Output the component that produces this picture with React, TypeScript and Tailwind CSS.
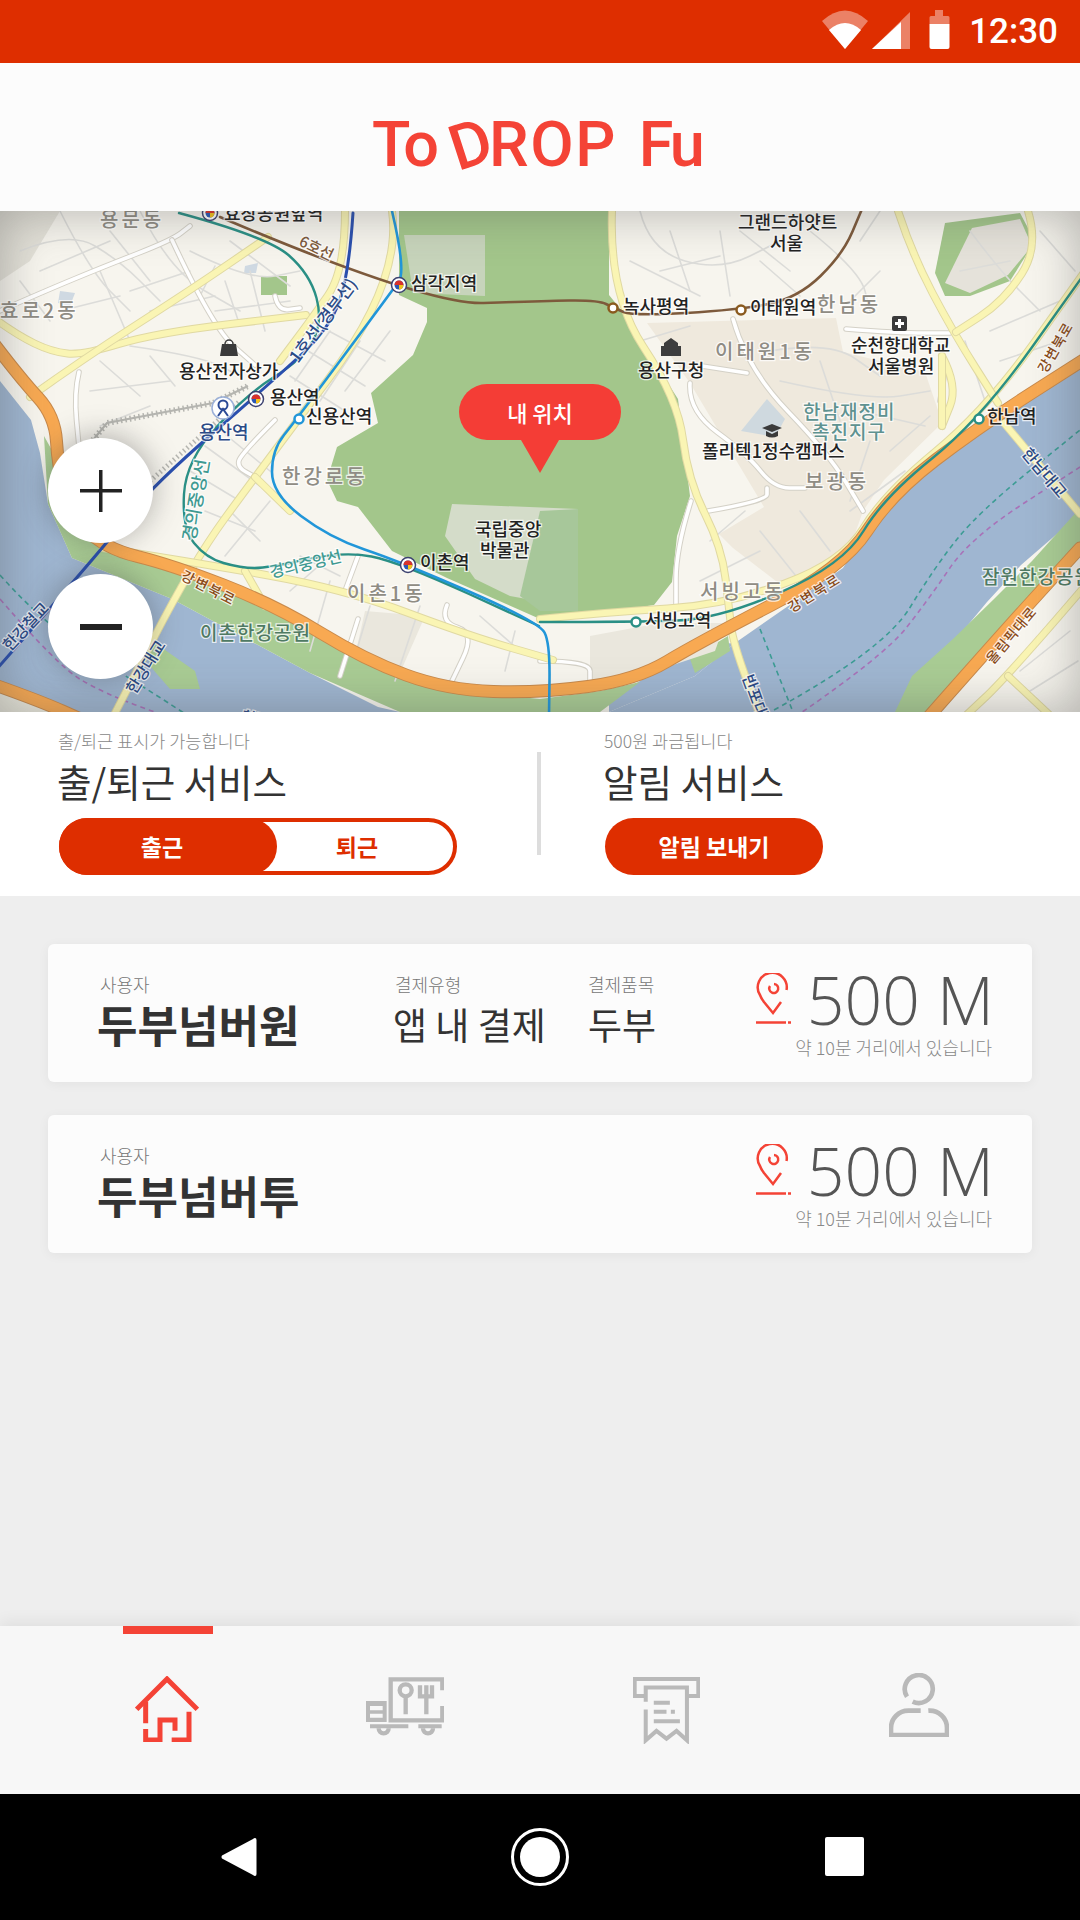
import React from 'react';

type Pt = [number, number];

// rounds the corners of a point list so the map roads don't look like polylines
const smooth = (pts: Pt[]) => {
  let d = `M${pts[0][0]} ${pts[0][1]}`;
  for (let i = 1; i < pts.length - 1; i++) {
    const mx = (pts[i][0] + pts[i + 1][0]) / 2;
    const my = (pts[i][1] + pts[i + 1][1]) / 2;
    d += ` Q${pts[i][0]} ${pts[i][1]} ${mx} ${my}`;
  }
  const last = pts[pts.length - 1];
  return d + ` L${last[0]} ${last[1]}`;
};

const poly = (pts: Pt[]) => pts.map((p) => p.join(',')).join(' ');

const Road: React.FC<{ pts: Pt[]; fill: string; casing?: string; w: number; dash?: string }> = ({ pts, fill, casing, w, dash }) => (
  <>
    {casing && <path d={smooth(pts)} fill="none" stroke={casing} strokeWidth={w + 2} strokeLinejoin="round" strokeLinecap="round" />}
    <path d={smooth(pts)} fill="none" stroke={fill} strokeWidth={w} strokeLinejoin="round" strokeLinecap={dash ? 'butt' : 'round'} strokeDasharray={dash} />
  </>
);

const orangeRoads: Pt[][] = [
  [[-5, 134], [21, 168], [55, 205], [58, 256], [70, 300], [103, 337], [172, 354], [275, 394], [365, 449], [447, 479], [540, 482], [636, 469], [698, 432], [843, 357], [891, 283], [980, 215], [1085, 148]],
  [[-5, 474], [40, 490], [85, 510]],
  [[925, 510], [1000, 425], [1080, 337]],
];

const yellowRoads: Pt[][] = [
  [[-5, 108], [17, 124], [52, 141], [83, 144], [155, 122], [306, 104]],
  [[30, 186], [83, 148], [189, 80], [268, 26]],
  [[345, 0], [345, 60], [310, 110], [280, 150]],
  [[392, 0], [402, 70], [255, 266], [193, 351], [113, 506]],
  [[103, 337], [193, 351], [344, 378], [470, 425], [553, 449]],
  [[540, 408], [609, 401], [726, 394], [843, 351], [884, 283], [987, 198], [1085, 60]],
  [[612, 0], [609, 84], [678, 188], [688, 269], [722, 337], [729, 398], [733, 432], [762, 510]],
  [[898, 0], [912, 43], [953, 121], [998, 192]],
  [[1028, 0], [1039, 36], [1004, 90], [956, 121]],
  [[942, 145], [958, 175], [942, 215]],
  [[942, 145], [942, 215]],
  [[1004, 212], [1080, 303]],
  [[1085, 375], [1008, 465], [960, 510]],
  [[1008, 465], [1056, 510]],
  [[255, 266], [290, 300]],
  [[245, 360], [265, 395]],
];

const whiteRoads: Pt[][] = [
  [[-5, 102], [45, 80], [103, 56], [172, 29], [190, 15]],
  [[172, 29], [213, 117], [255, 154]],
  [[79, 161], [74, 182], [79, 236]],
  [[275, 209], [241, 243], [237, 256], [255, 266]],
  [[275, 85], [278, 100], [300, 97]],
  [[358, 408], [340, 465]],
  [[447, 394], [440, 411], [475, 422], [451, 472]],
  [[358, 345], [345, 380]],
  [[690, 172], [688, 200], [747, 243], [774, 277], [805, 277]],
  [[733, 108], [747, 158], [829, 243], [863, 300]],
  [[846, 118], [898, 122], [950, 122]],
  [[702, 155], [747, 162]],
  [[708, 300], [767, 290], [767, 277]],
  [[691, 290], [676, 338], [676, 398]],
  [[540, 450], [590, 450], [590, 470]],
  [[945, 160], [940, 190]],
];

const thinRoads: Pt[][] = [
  [[20, 40], [70, 20], [120, 50], [160, 90]], [[60, 0], [90, 60], [130, 100]], [[140, 0], [170, 60], [240, 100]], [[100, 60], [130, 130]],
  [[20, 70], [50, 110]], [[190, 40], [250, 70], [300, 60]], [[200, 85], [215, 55]], [[225, 70], [240, 115]], [[250, 60], [265, 120]],
  [[215, 100], [290, 90]], [[130, 135], [200, 145], [240, 165]], [[90, 180], [170, 170]], [[100, 215], [150, 195]], [[190, 260], [240, 290]],
  [[205, 235], [260, 275]], [[215, 215], [270, 260]], [[205, 300], [255, 320]], [[240, 290], [200, 340]], [[270, 290], [225, 345]],
  [[310, 110], [385, 150]], [[300, 135], [365, 175]], [[290, 165], [345, 200]], [[330, 120], [295, 170]], [[360, 130], [320, 190]],
  [[390, 120], [345, 180]], [[300, 345], [340, 365]], [[330, 370], [310, 440]], [[370, 395], [355, 445]], [[420, 395], [395, 470]],
  [[480, 405], [520, 440]], [[515, 420], [505, 460]], [[640, 0], [650, 40], [720, 60], [780, 30]], [[630, 50], [700, 85]], [[670, 20], [690, 80]],
  [[720, 20], [730, 85]], [[760, 50], [800, 85]], [[810, 20], [860, 60], [870, 100]], [[850, 90], [880, 60]], [[770, 140], [830, 130], [880, 165]],
  [[780, 170], [870, 190], [930, 180]], [[820, 150], [840, 210]], [[870, 230], [850, 290]], [[800, 300], [830, 340]], [[760, 320], [800, 370]],
  [[970, 20], [1000, 60], [1040, 100]], [[960, 60], [1010, 50]], [[990, 120], [1060, 90]], [[1000, 150], [1060, 130]], [[1040, 20], [1075, 60]],
  [[965, 130], [985, 190]], [[1020, 460], [1070, 420]], [[1030, 480], [1078, 450]], [[710, 330], [745, 300]], [[700, 370], [760, 340]],
  [[110, 20], [150, 70]], [[40, 60], [110, 30]], [[130, 80], [190, 60]], [[150, 100], [215, 85]], [[60, 100], [120, 85]], [[230, 30], [290, 75]],
  [[100, 150], [140, 185]], [[150, 145], [175, 175]], [[230, 300], [260, 330]], [[290, 380], [330, 345]], [[640, 130], [690, 115]], [[860, 200], [925, 215]],
  [[890, 240], [930, 205]], [[850, 300], [905, 260]], [[740, 20], [790, 60]], [[660, 60], [720, 45]], [[880, 0], [860, 30]],
];

const dashLines: { pts: Pt[]; c: string }[] = [
  { pts: [[760, 418], [795, 506]], c: '#3c9c94' },
  { pts: [[774, 499], [884, 439], [936, 354], [980, 300], [1080, 219]], c: '#3c9c94' },
  { pts: [[795, 506], [884, 445], [929, 388], [970, 327], [1080, 256]], c: '#a872b8' },
  { pts: [[0, 364], [45, 415], [150, 480], [190, 506]], c: '#3c9c94' },
  { pts: [[0, 388], [58, 455], [103, 482], [179, 510]], c: '#a872b8' },
];

type Label = { t: string; x: number; y: number; s?: number; c?: string; r?: number; ls?: number };

const GREY = '#8f8c84';
const TEAL = '#3f9a92';
const NAVY = '#2b4a86';
const ROADTXT = '#8a4b18';

const labels: Label[] = [
  { t: '효창공원앞역', x: 224, y: 9 },
  { t: '용문동', x: 100, y: 16, s: 20, c: GREY, ls: 3 },
  { t: '효로2동', x: 0, y: 107, s: 20, c: GREY, ls: 3 },
  { t: '삼각지역', x: 411, y: 79 },
  { t: '용산전자상가', x: 179, y: 167 },
  { t: '용산역', x: 270, y: 193 },
  { t: '신용산역', x: 306, y: 212 },
  { t: '용산역', x: 199, y: 228, c: NAVY },
  { t: '한강로동', x: 282, y: 273, s: 20, c: GREY, ls: 3 },
  { t: '국립중앙', x: 475, y: 325 },
  { t: '박물관', x: 480, y: 346 },
  { t: '이촌역', x: 420, y: 358 },
  { t: '이촌1동', x: 347, y: 390, s: 20, c: GREY, ls: 3 },
  { t: '이촌한강공원', x: 200, y: 429, s: 19, c: '#4f7a63', ls: 1 },
  { t: '경의중앙선', x: 271, y: 367, s: 16, c: TEAL, r: -13 },
  { t: '경의중앙선', x: 195, y: 331, s: 18, c: TEAL, r: -80 },
  { t: '1호선(경부선)', x: 298, y: 153, s: 17, c: NAVY, r: -53 },
  { t: '6호선', x: 298, y: 34, s: 15, c: '#7d5a3c', r: 26 },
  { t: '강변북로', x: 180, y: 368, s: 14, c: ROADTXT, r: 27, ls: 2 },
  { t: '한강철교', x: 10, y: 441, s: 16, c: NAVY, r: -47 },
  { t: '한강대교', x: 135, y: 484, s: 16, c: NAVY, r: -58 },
  { t: '한강', x: 241, y: 510, s: 15, c: NAVY, r: 12 },
  { t: '그랜드하얏트', x: 738, y: 18 },
  { t: '서울', x: 770, y: 39 },
  { t: '녹사평역', x: 623, y: 102 },
  { t: '이태원역', x: 750, y: 103 },
  { t: '한남동', x: 817, y: 101, s: 20, c: GREY, ls: 3 },
  { t: '용산구청', x: 638, y: 166 },
  { t: '이태원1동', x: 715, y: 148, s: 20, c: GREY, ls: 3 },
  { t: '순천향대학교', x: 851, y: 141 },
  { t: '서울병원', x: 868, y: 162 },
  { t: '한남재정비', x: 803, y: 208, s: 19, c: '#5f9290', ls: 1 },
  { t: '촉진지구', x: 812, y: 228, s: 19, c: '#5f9290', ls: 1 },
  { t: '폴리텍1정수캠퍼스', x: 702, y: 247 },
  { t: '보광동', x: 805, y: 278, s: 20, c: GREY, ls: 3 },
  { t: '서빙고동', x: 700, y: 388, s: 20, c: GREY, ls: 3 },
  { t: '서빙고역', x: 645, y: 416 },
  { t: '한남역', x: 987, y: 212 },
  { t: '한남대교', x: 1021, y: 243, s: 16, c: NAVY, r: 50 },
  { t: '강변북로', x: 792, y: 402, s: 14, c: ROADTXT, r: -32, ls: 2 },
  { t: '강변북로', x: 1046, y: 163, s: 14, c: ROADTXT, r: -60, ls: 1 },
  { t: '올림픽대로', x: 993, y: 454, s: 14, c: ROADTXT, r: -50, ls: 1 },
  { t: '반포대교', x: 742, y: 466, s: 16, c: NAVY, r: 70 },
  { t: '잠원한강공원', x: 982, y: 373, s: 19, c: '#4f7a63', ls: 1 },
];

const multiStations: Pt[] = [[210, 2], [399, 74], [256, 188], [408, 354]];
const ringStations: { p: Pt; c: string }[] = [
  { p: [299, 208], c: '#2196d9' },
  { p: [613, 97], c: '#8a5a1e' },
  { p: [741, 99], c: '#8a5a1e' },
  { p: [636, 411], c: '#2a8f85' },
  { p: [979, 208], c: '#2a8f85' },
];

const MapArt = () => (
  <svg className="absolute inset-0" width="1080" height="501" viewBox="0 0 1080 501">
    <g className="blur-[0.7px]">
      <rect width="1080" height="501" fill="#f7f5ee" />
      {/* left upper hill */}
      <polygon points="0,0 60,0 30,50 0,70" fill="#e4e2d9" />
      {/* beige district */}
      <polygon points={poly([[647, 112], [836, 107], [843, 141], [925, 161], [939, 202], [939, 215], [884, 269], [863, 300], [850, 337], [781, 374], [733, 337], [719, 323], [764, 296], [690, 172]])} fill="#efe9dd" />
      {/* river */}
      <polygon points={poly([[0, 170], [31, 209], [40, 242], [48, 293], [72, 347], [172, 388], [310, 462], [378, 496], [400, 501], [609, 501], [695, 465], [735, 432], [843, 357], [891, 283], [980, 215], [1080, 151], [1080, 303], [1021, 354], [987, 391], [953, 432], [905, 501], [0, 501]])} fill="#9fb6d1" />
      {/* river banks */}
      <polygon points={poly([[44, 225], [58, 250], [66, 300], [100, 335], [172, 354], [275, 394], [365, 449], [447, 479], [540, 488], [540, 501], [400, 501], [310, 462], [172, 388], [72, 347], [48, 293]])} fill="#a9cc94" />
      <polygon points={poly([[695, 465], [735, 432], [700, 434], [640, 470], [609, 490], [609, 501]])} fill="#9fb6d1" />
      <polygon points={poly([[690, 448], [728, 425], [730, 440], [695, 462]])} fill="#a9cc94" />
      <polygon points={poly([[540, 488], [600, 480], [640, 471], [600, 501], [540, 501]])} fill="#a9cc94" />
      <polygon points={poly([[1080, 297], [1080, 337], [1040, 395], [987, 452], [935, 501], [895, 501], [912, 465], [953, 428], [994, 388], [1032, 350]])} fill="#a9cc94" />
      <polygon points={poly([[1080, 340], [1080, 501], [925, 501]])} fill="#f7f5ee" />
      <polygon points={poly([[145, 425], [195, 460], [200, 478], [170, 478], [150, 455]])} fill="#a9cc94" />
      <polygon points={poly([[0, 476], [85, 505], [0, 505]])} fill="#efeee2" />
      {/* park */}
      <polygon points={poly([[399, 0], [609, 0], [609, 84], [622, 100], [678, 188], [688, 269], [690, 285], [677, 325], [672, 371], [654, 394], [609, 401], [540, 408], [447, 367], [392, 340], [358, 296], [337, 290], [327, 269], [337, 236], [378, 212], [371, 182], [413, 144], [427, 111], [427, 97], [399, 84]])} fill="#a3c68b" />
      <polygon points={poly([[404, 24], [485, 24], [485, 85], [413, 82]])} fill="#c7d4bb" />
      {/* museum */}
      <polygon points={poly([[452, 293], [578, 298], [578, 345], [565, 395], [510, 385], [475, 368], [445, 325]])} fill="#d4dcc9" />
      <polygon points={poly([[540, 300], [578, 298], [578, 400], [540, 400], [520, 385]])} fill="#a7c79a" />
      <polygon points={poly([[261, 65], [287, 65], [287, 84], [261, 84]])} fill="#a3c68b" />
      {/* hill, upper right */}
      <polygon points={poly([[935, 62], [945, 12], [1020, 2], [1035, 30], [1010, 70], [970, 85], [945, 85]])} fill="#a3c68b" />
      <polygon points={poly([[945, 72], [972, 17], [1020, 8], [1032, 35], [1008, 64], [970, 82]])} fill="#e5e2da" />
      {/* parking blocks and ponds */}
      <polygon points={poly([[590, 425], [660, 412], [725, 412], [715, 440], [640, 465], [590, 470]])} fill="#eae7dd" />
      <polygon points={poly([[365, 400], [425, 405], [400, 462], [355, 445]])} fill="#eae7dd" />
      <polygon points={poly([[741, 220], [767, 188], [785, 208], [775, 226]])} fill="#cfd9df" />
      <polygon points={poly([[60, 80], [75, 82], [70, 95], [58, 92]])} fill="#cfd9e2" />
      <polygon points={poly([[245, 55], [258, 52], [256, 62], [244, 62]])} fill="#cfd9e2" />

      {thinRoads.map((pts, i) => <Road key={i} pts={pts} fill="#dcdcd9" w={1.6} />)}
      {dashLines.map((l, i) => <Road key={i} pts={l.pts} fill={l.c} w={1.6} dash="5 4" />)}

      <path d="M93 229 L107 212 L213 192 L248 175" fill="none" stroke="#b5b5b0" strokeWidth="6" strokeDasharray="1.5 3" />
      <path d="M93 229 L107 212 L213 192 L248 175" fill="none" stroke="#b5b5b0" strokeWidth="2" />
      <path d="M150 270 L240 190" fill="none" stroke="#b5b5b0" strokeWidth="5" strokeDasharray="1.5 3" />

      {whiteRoads.map((pts, i) => <Road key={i} pts={pts} fill="#ffffff" casing="#d4d1c7" w={3.6} />)}
      {yellowRoads.map((pts, i) => <Road key={i} pts={pts} fill="#faf5b4" casing="#e0d9a2" w={6} />)}
      {orangeRoads.map((pts, i) => <Road key={i} pts={pts} fill="#f8a952" casing="#c88a4c" w={11} />)}

      <Road pts={[[220, 6], [427, 94], [540, 90], [598, 89], [614, 97], [633, 105], [739, 99], [798, 87], [843, 43], [862, -2]]} fill="#7d5a3c" w={2.6} />
      <Road pts={[[179, 2], [268, 26], [310, 63], [323, 111], [303, 148], [248, 182], [186, 249], [182, 317], [206, 347], [241, 357], [268, 357], [344, 340], [399, 351], [539, 415]]} fill="#2a8f85" w={2.4} />
      <Road pts={[[540, 411], [636, 411], [719, 408], [843, 354], [884, 286], [980, 209], [1085, 62]]} fill="#2a8f85" w={2.4} />
      <Road pts={[[392, 0], [406, 60], [392, 80], [296, 209], [272, 239], [272, 283], [330, 327], [399, 350], [539, 411], [550, 432], [549, 506]]} fill="#2196d9" w={2.6} />
      <Road pts={[[353, 2], [349, 63], [330, 117], [275, 168], [151, 276], [103, 337], [-5, 460]]} fill="#2a4fae" w={3} />

      {/* small map symbols */}
      <path d="M222 133 h14 l2 12 h-18 z" fill="#3a3a3a" />
      <path d="M225 133 a4 4 0 0 1 8 0" fill="none" stroke="#3a3a3a" strokeWidth="1.5" />
      <path d="M671 127 l7 5 v3 h3 v10 h-20 v-10 h3 v-3 z" fill="#3d3d3d" />
      <rect x="892" y="105" width="15" height="15" rx="2" fill="#3a3a3a" />
      <path d="M899.500 108 v9 M895 112.500 h9" stroke="#ffffff" strokeWidth="3" />
      <path d="M762 217 l10 -4 l10 4 l-10 4 z M766 220 v5 q6 3 12 0 v-5 l-6 3 z" fill="#3a3a3a" />
    </g>

    {multiStations.map(([x, y], i) => (
      <g key={i}>
        <circle cx={x} cy={y} r="7.500" fill="#ffffff" stroke="#3c4270" strokeWidth="1.500" />
        <circle cx={x} cy={y} r="4.500" fill="#2b58b5" />
        <path d={`M${x - 4.500} ${y} a4.500 4.500 0 0 1 9 0 z`} fill="#d9322a" />
        <path d={`M${x} ${y} h4.500 a4.500 4.500 0 0 1 -4.500 4.500 z`} fill="#f2c21c" />
      </g>
    ))}
    {ringStations.map(({ p, c }, i) => (
      <circle key={i} cx={p[0]} cy={p[1]} r="4.500" fill="#ffffff" stroke={c} strokeWidth="2.500" />
    ))}
    <circle cx="223" cy="197" r="11" fill="#ffffff" stroke="#9bb0d8" strokeWidth="1.500" />
    <circle cx="223" cy="194" r="4.500" fill="none" stroke="#2b4a96" strokeWidth="2" />
    <path d="M218 205 l5 -7 l5 7" fill="none" stroke="#2b4a96" strokeWidth="2" />

    {labels.map((l, i) => (
      <text
        key={i}
        x={l.x}
        y={l.y}
        fontSize={l.s ?? 18}
        fill={l.c ?? '#222222'}
        letterSpacing={l.ls ?? 0}
        stroke="#ffffff"
        strokeOpacity={0.75}
        strokeWidth={2.5}
        transform={l.r ? `rotate(${l.r} ${l.x} ${l.y})` : undefined}
        className="font-medium [paint-order:stroke]"
      >
        {l.t}
      </text>
    ))}
  </svg>
);

const PinIcon = () => (
  <svg width="36" height="52" viewBox="0 0 36 52" fill="none" stroke="#f44336" strokeWidth="2.500">
    <path d="M30.500 17 A14.500 14.500 0 1 0 4 22 Q5 25 8 29 L17 40 L25 29" />
    <path d="M14 13 A4.500 4.500 0 1 0 18 11" />
    <path d="M0 49.500 H30 M32 49.500 H35" />
  </svg>
);

const Card: React.FC<{ name: string; extra?: boolean }> = ({ name, extra }) => (
  <div className="h-[138px] rounded-md bg-[#fcfcfc] shadow-[0_2px_12px_rgba(0,0,0,0.05)] flex">
    <div className="w-[345px] pl-[52px] pt-[29px] shrink-0">
      <p className="h-[22px] leading-[22px] text-[18px] text-[#777777] font-light">사용자</p>
      <p className="mt-[2px] -ml-[3px] h-[54px] leading-[54px] text-[44px] font-bold text-[#333333]">{name}</p>
    </div>
    {extra && (
      <>
        <div className="w-[195px] pt-[29px] shrink-0">
          <p className="h-[22px] leading-[22px] text-[18px] text-[#777777] font-light pl-[2px]">결제유형</p>
          <p className="mt-[5px] h-[48px] leading-[48px] text-[37px] text-[#333333] font-normal">앱 내 결제</p>
        </div>
        <div className="pt-[29px] shrink-0">
          <p className="h-[22px] leading-[22px] text-[18px] text-[#777777] font-light">결제품목</p>
          <p className="mt-[5px] h-[48px] leading-[48px] text-[37px] text-[#333333] font-normal">두부</p>
        </div>
      </>
    )}
    <div className="ml-auto pr-[40px] pt-[23px] flex flex-col items-end">
      <div className="flex items-start mr-[-2px]">
        <div className="pt-[6px] mr-[15px]">
          <PinIcon />
        </div>
        <p className="h-[64px] leading-[64px] text-[66px] font-['Open_Sans',sans-serif] font-light text-[#555555]">500 M</p>
      </div>
      <p className="mt-[5px] h-[22px] leading-[22px] text-[18px] text-[#888888] font-light">약 10분 거리에서 있습니다</p>
    </div>
  </div>
);

const StatusBar = () => (
  <div className="h-[63px] bg-[#de2e00] flex items-center justify-end pr-[22px]">
    <svg width="128" height="63" viewBox="0 0 128 63" className="mr-[19px]">
      <path d="M0 21 Q23 0 46 21 L23 49 Z" fill="#ffffff" fillOpacity="0.4" />
      <path d="M7 30 Q23 16 39 30 L23 49 Z" fill="#ffffff" />
      <polygon points="88,12 88,49 50,49" fill="#ffffff" fillOpacity="0.4" />
      <polygon points="79,22 79,49 50,49" fill="#ffffff" />
      <path d="M113 10 h8 v6 h5 a1.500 1.500 0 0 1 1.500 1.500 V24 h-20 v-6.500 a1.500 1.500 0 0 1 1.500 -1.500 h4 z" fill="#ffffff" fillOpacity="0.4" />
      <path d="M107.500 24 h20 v23 a2 2 0 0 1 -2 2 h-16 a2 2 0 0 1 -2 -2 z" fill="#ffffff" />
    </svg>
    <span className="font-['Roboto',sans-serif] font-medium text-[35px] text-white leading-none">12:30</span>
  </div>
);

const Logo = () => (
  <div className="h-[148px] bg-[#fcfcfc] flex items-center justify-center pt-[15px] pr-[6px] font-['Roboto',sans-serif] font-medium text-[63px] leading-none text-[#f44336]">
    <span className="tracking-[-3px]">To</span>
    <span className="inline-block ml-[14px] -rotate-[18deg]">D</span>
    <span className="tracking-[1.500px] ml-[-2px]">ROP</span>
    <span className="ml-[22px] tracking-[-3px]">Fu</span>
  </div>
);

const ZoomButton: React.FC<{ children: React.ReactNode }> = ({ children }) => (
  <div className="w-[105px] h-[105px] rounded-full bg-white flex items-center justify-center shadow-[0_-2px_30px_rgba(60,60,60,0.4)]">
    <svg width="42" height="42" viewBox="0 0 42 42" fill="#222222">{children}</svg>
  </div>
);

const MapPanel = () => (
  <div className="relative h-[501px] overflow-hidden">
    <MapArt />
    <div className="absolute inset-0 shadow-[inset_0_0_50px_rgba(70,70,70,0.4)]" />
    <div className="absolute left-[48px] top-[227px] flex flex-col gap-[31px]">
      <ZoomButton>
        <rect x="0" y="19" width="42" height="3.500" />
        <rect x="19" y="0" width="3.500" height="42" />
      </ZoomButton>
      <ZoomButton>
        <rect x="0" y="18" width="42" height="6" />
      </ZoomButton>
    </div>
    <div className="absolute left-[459px] top-[173px] w-[162px] flex flex-col items-center">
      <div className="w-[162px] h-[56px] rounded-full bg-[#f43d36] flex items-center justify-center text-white text-[22px] font-medium">내 위치</div>
      <div className="w-0 h-0 border-l-[19px] border-r-[19px] border-t-[33px] border-l-transparent border-r-transparent border-t-[#f43d36]" />
    </div>
  </div>
);

const ServicePanel = () => (
  <div className="h-[184px] bg-white flex pt-[18px]">
    <div className="w-[537px] pl-[59px] shrink-0">
      <p className="-ml-[1px] h-[22px] leading-[22px] text-[17.500px] text-[#888888] font-light">출/퇴근 표시가 가능합니다</p>
      <p className="mt-[5px] h-[48px] leading-[48px] text-[37.500px] text-[#333333] font-normal -ml-[2px]">출/퇴근 서비스</p>
      <div className="mt-[13px] w-[398px] h-[57px] rounded-full border-[4px] border-[#de2e00] flex items-center text-[23px] font-bold">
        <div className="-ml-[4px] w-[218px] h-[57px] rounded-full bg-[#de2e00] text-white flex items-center justify-center pr-[12px]">출근</div>
        <div className="flex-1 text-center text-[#de2e00] pr-[16px]">퇴근</div>
      </div>
    </div>
    <div className="w-[4px] h-[103px] mt-[22px] bg-[#dddddd] shrink-0" />
    <div className="pl-[64px]">
      <p className="-ml-[1px] h-[22px] leading-[22px] text-[17.500px] text-[#888888] font-light">500원 과금됩니다</p>
      <p className="mt-[5px] h-[48px] leading-[48px] text-[37.500px] text-[#333333] font-normal -ml-[2px]">알림 서비스</p>
      <div className="mt-[13px] w-[218px] h-[57px] rounded-full bg-[#de2e00] text-white flex items-center justify-center text-[23px] font-bold">알림 보내기</div>
    </div>
  </div>
);

const BottomNav = () => (
  <div className="relative h-[168px] bg-[#f7f7f7] shadow-[0_-5px_14px_rgba(0,0,0,0.06)] flex items-start pt-[50px] pl-[135px]">
    <div className="absolute left-[123px] top-0 w-[90px] h-[8px] bg-[#f44336]" />
    <svg width="64" height="66" viewBox="105 198 192 198" fill="none" stroke="#f44336" strokeWidth="15">
      <path d="M110 298 L201 207 L292 298" />
      <path d="M137 275 V340 M137 357 V390 H180 V330 H225 V362 M215 390 H267 V305" />
    </svg>
    <svg width="78" height="62" viewBox="798 200 234 186" fill="none" stroke="#b9b9b9" strokeWidth="13" className="ml-[167px] mt-[1px]">
      <path d="M1027 240 V207 H872 V330 H1027 V287" />
      <circle cx="917" cy="240" r="18" />
      <path d="M917 258 V312 M960 225 V258 H996 V225 M979 225 V312" />
      <path d="M798 272 H860 V335 H798 Z M810 287 V300 H848 V287 Z M810 310 V322 H848 V310 Z" fill="#b9b9b9" fillRule="evenodd" stroke="none" />
      <path d="M810 348 H925 M955 348 H1025" strokeWidth="12" />
      <path d="M836 354 a15 15 0 1 0 30 0 M969 354 a15 15 0 1 0 30 0" />
    </svg>
    <svg width="67" height="67" viewBox="100 201 200 200" fill="none" stroke="#b9b9b9" strokeWidth="12" className="ml-[189px] mt-[1px]">
      <path d="M137 258 H105 V207 H295 V258 H265" />
      <path d="M138 298 V390 L170 362 L200 385 L230 362 L261 390 V232 H138 V275" />
      <path d="M162 278 H210 M162 305 H200 M213 305 H225 M162 333 H240" strokeWidth="12" />
    </svg>
    <svg width="60" height="64" viewBox="867 189 180 192" fill="none" stroke="#b9b9b9" strokeWidth="14" className="ml-[189px] -mt-[3px]">
      <path d="M921 260 A42 42 0 1 1 938 275" />
      <path d="M962 302 H925 A52 52 0 0 0 873 354 V375 H1041 V354 A52 52 0 0 0 985 302" />
    </svg>
  </div>
);

const SystemBar = () => (
  <div className="h-[126px] bg-black flex items-center pl-[221px] pb-[1px]">
    <svg width="36" height="40" viewBox="0 0 36 40" fill="#ffffff">
      <path d="M34 1 Q35.500 1 35.500 3 V37 Q35.500 39 34 39 Q33 39 32 38 L1 21.500 Q0 20 1 18.500 L32 2 Q33 1 34 1 Z" />
    </svg>
    <div className="ml-[254px] w-[58px] h-[58px] rounded-full border-[3px] border-white flex items-center justify-center">
      <div className="w-[40px] h-[40px] rounded-full bg-white" />
    </div>
    <div className="ml-[256px] w-[39px] h-[39px] rounded-[2px] bg-white" />
  </div>
);

export default function App() {
  return (
    <div className="w-[1080px] h-[1920px] flex flex-col bg-[#eeeeee] overflow-hidden font-['Noto_Sans_CJK_KR','Noto_Sans',sans-serif]">
      <StatusBar />
      <Logo />
      <MapPanel />
      <ServicePanel />
      <div className="flex-1 px-[48px] pt-[48px] flex flex-col gap-[33px]">
        <Card name="두부넘버원" extra />
        <Card name="두부넘버투" />
      </div>
      <BottomNav />
      <SystemBar />
    </div>
  );
}
